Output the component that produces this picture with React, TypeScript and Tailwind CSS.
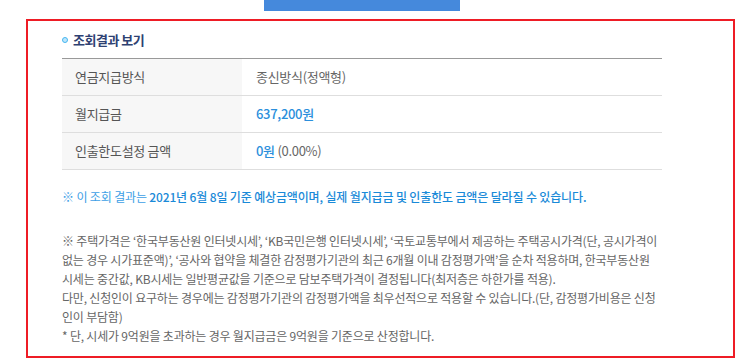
import React from 'react';

const rows = [
  { label: '연금지급방식', value: <span className="text-[#666]">종신방식(정액형)</span> },
  { label: '월지급금', value: <span className="font-medium text-[#2b8fdc]">637,200원</span> },
  {
    label: '인출한도설정 금액',
    value: (
      <span>
        <span className="font-medium text-[#2b8fdc]">0원</span>
        <span className="text-[#666]"> (0.00%)</span>
      </span>
    ),
  },
];

export default function App() {
  return (
    <div
      className="min-h-screen bg-white"
      style={{ fontFamily: '"Noto Sans CJK KR", "Noto Sans", sans-serif' }}
    >
      <div className="ml-[264px] h-[11px] w-[196px] bg-[#4589dc]" />

      <div className="ml-[26px] mt-[8px] h-[339px] w-[709px] border-2 border-[#ee1c25] pl-[34px]">
        {/* title */}
        <div className="flex h-[20px] items-center gap-[5px] mt-[9px]">
          <span className="h-[6px] w-[6px] rounded-full border-[1.5px] border-[#45b6f0] bg-[#bfe6fb]" />
          <span className="text-[13px] font-bold tracking-[-0.5px] text-[#2e4172]">조회결과 보기</span>
        </div>

        {/* result table */}
        <div className="mt-[8px] w-[600px] border-t border-[#999]">
          {rows.map((r) => (
            <div key={r.label} className="flex h-[37px] border-b border-[#dedede] text-[13px] tracking-[-0.3px]">
              <div className="flex w-[180px] items-center bg-[#f7f7f7] pl-[13px] text-[#555]">{r.label}</div>
              <div className="flex items-center pl-[14px]">{r.value}</div>
            </div>
          ))}
        </div>

        {/* notice */}
        <p className="mt-[17px] text-[12px] leading-[19px] tracking-[-0.15px] text-[#3da0e6]">
          ※ 이 조회 결과는{' '}
          <span className="font-medium text-[#1a8ad8]">
            2021년 6월 8일 기준 예상금액이며, 실제 월지급금 및 인출한도 금액은 달라질 수 있습니다.
          </span>
        </p>

        <div className="mt-[25px] w-[600px] text-[12px] leading-[19px] tracking-[-0.2px] text-[#666]">
          <p>
            ※ 주택가격은 ‘한국부동산원 인터넷시세’, ‘KB국민은행 인터넷시세’, ‘국토교통부에서 제공하는 주택공시가격(단, 공시가격이
            없는 경우 시가표준액)’, ‘공사와 협약을 체결한 감정평가기관의 최근 6개월 이내 감정평가액’을 순차 적용하며, 한국부동산원
            시세는 중간값, KB시세는 일반평균값을 기준으로 담보주택가격이 결정됩니다(최저층은 하한가를 적용).
          </p>
          <p>
            다만, 신청인이 요구하는 경우에는 감정평가기관의 감정평가액을 최우선적으로 적용할 수 있습니다.(단, 감정평가비용은 신청
            인이 부담함)
          </p>
          <p>* 단, 시세가 9억원을 초과하는 경우 월지급금은 9억원을 기준으로 산정합니다.</p>
        </div>
      </div>
    </div>
  );
}
